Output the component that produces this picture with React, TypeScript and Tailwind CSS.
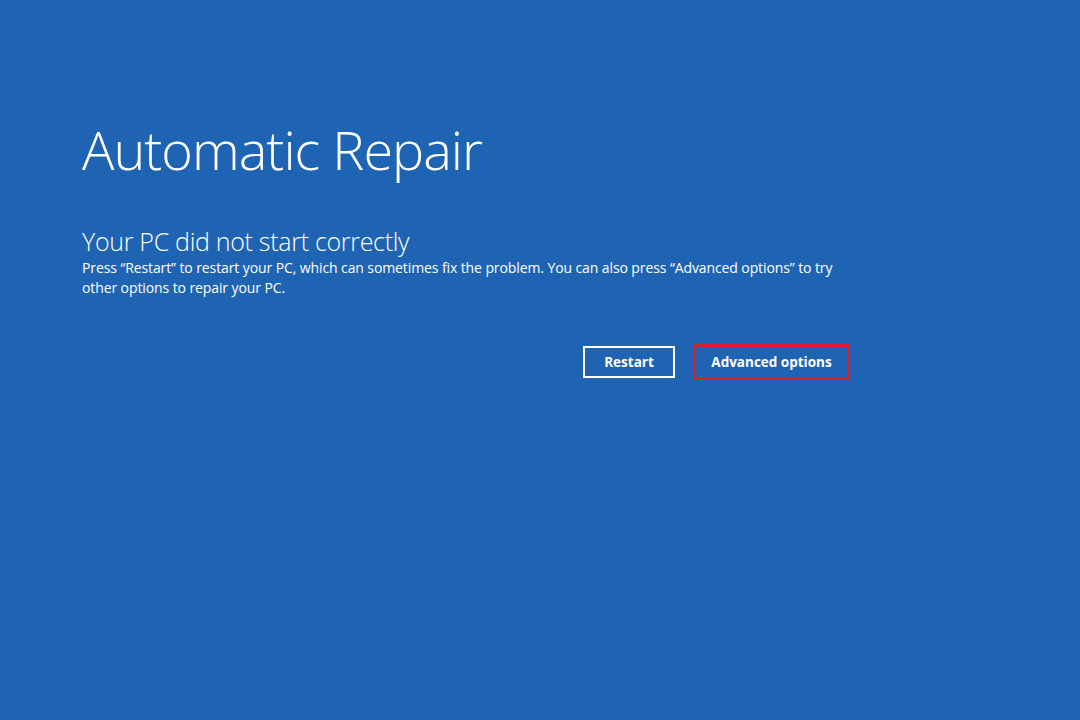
export default function App() {
  return (
    <div
      className="w-[1080px] h-[720px] bg-[#1f64b2] text-white overflow-hidden"
      style={{ fontFamily: '"Open Sans", "Noto Sans", sans-serif' }}
    >
      <div className="w-[768px] ml-[82px] pt-[113px]">
        <h1 className="text-[54px] font-light leading-[72px] tracking-[-1px]">
          Automatic Repair
        </h1>

        <h2 className="mt-[40px] text-[25px] font-light leading-[32px] tracking-[-0.3px]">
          Your PC did not start correctly
        </h2>
        <p className="max-w-[760px] mt-[1px] text-[14px] leading-[20px] tracking-[-0.1px]">
          Press “Restart” to restart your PC, which can sometimes fix the problem. You can also press
          “Advanced options” to try other options to repair your PC.
        </p>

        {/* action buttons */}
        <div className="flex justify-end items-center gap-[18px] mt-[46px]">
          <button className="w-[92px] h-[32px] border-2 border-white text-[13.5px] font-bold">
            Restart
          </button>
          <button className="w-[157px] h-[36px] border-[3px] border-[#d8202d] text-[13.5px] font-bold">
            Advanced options
          </button>
        </div>
      </div>
    </div>
  );
}
